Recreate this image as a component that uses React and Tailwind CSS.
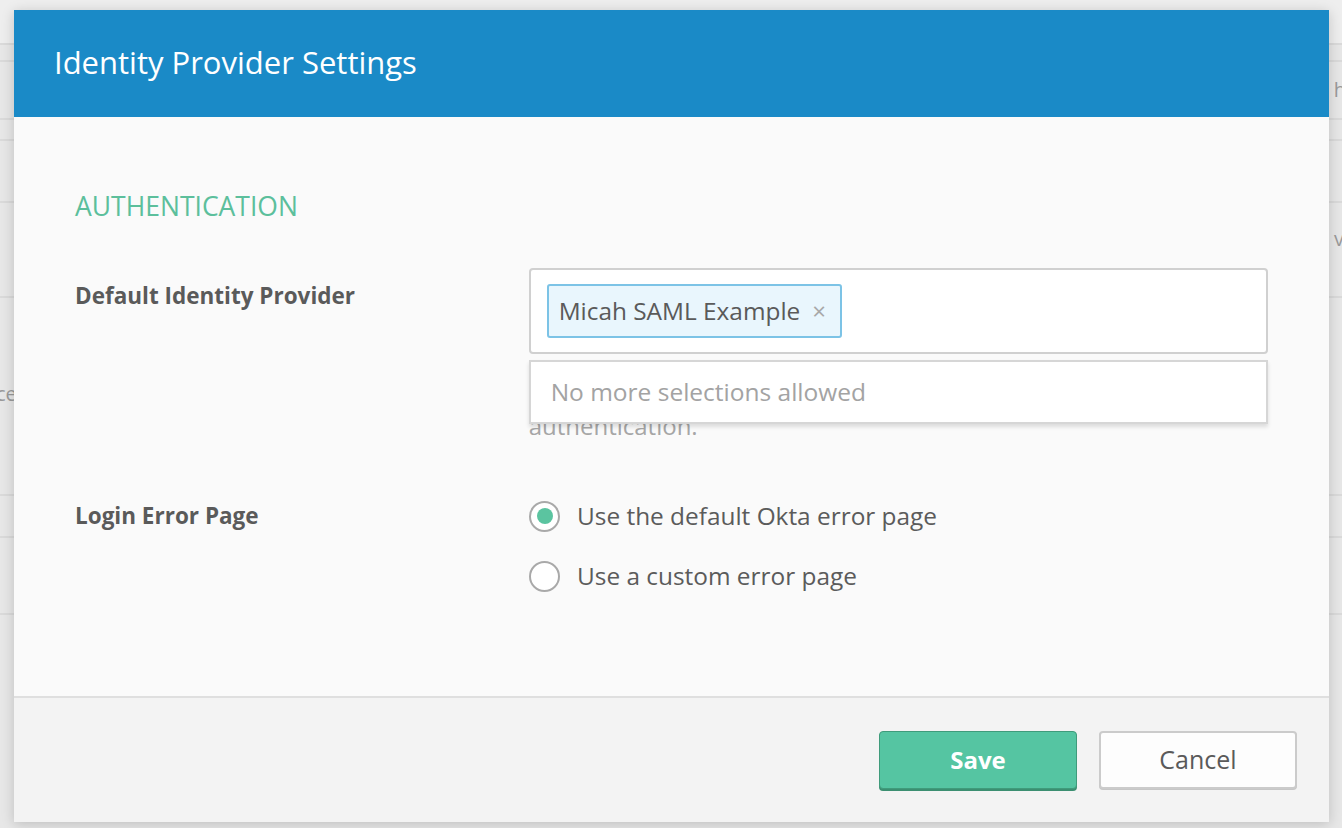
import { useState } from 'react';

const font = { fontFamily: '"Open Sans", Lato, sans-serif' };

const Radio = ({ checked, label, onClick }) => (
    <button onClick={onClick} className="flex items-center gap-[17px] h-[30px] text-left">
        <span className="w-[31px] h-[31px] rounded-full border-2 border-[#a9a9a9] bg-white flex items-center justify-center">
            {checked && <span className="w-[16px] h-[16px] rounded-full bg-[#5bc4a0]" />}
        </span>
        <span className="text-[24.4px] text-[#5b5b5b]">{label}</span>
    </button>
);

const App = () => {
    const [choice, setChoice] = useState('default');

    return (
        <div className="relative w-[1342px] h-[828px] overflow-hidden bg-[#e7e7e7]" style={font}>
            {/* page behind the dialog */}
            <div className="flex flex-col text-[20px] text-[#9a9a9a]">
                <div className="h-[45px] border-b-2 border-[#dadada] bg-[#eeeeee]" />
                <div className="h-[17px] border-b-2 border-[#dadada]" />
                <div className="h-[58px] border-b-2 border-[#dadada] flex justify-end items-center">
                    <span className="mr-[-4px]">h</span>
                </div>
                <div className="h-[21px] border-b-2 border-[#dadada]" />
                <div className="h-[62px] border-b-2 border-[#dadada]" />
                <div className="h-[95px] border-b-2 border-[#dadada] flex justify-end items-center">
                    <span className="mr-[-2px] -mt-[22px]">v</span>
                </div>
                <div className="h-[198px] border-b-2 border-[#dadada] flex items-center">
                    <span className="ml-[-4px] -mt-[4px]">ce</span>
                </div>
                <div className="h-[42px] border-b-2 border-[#dadada]" />
                <div className="h-[77px] border-b-2 border-[#dadada]" />
            </div>

            {/* dialog */}
            <div className="absolute left-[14px] top-[10px] w-[1315px] h-[812px] flex flex-col shadow-[0_2px_12px_rgba(0,0,0,0.18)]">
                <div className="h-[107px] bg-[#1a8ac7] flex items-center px-[40px]">
                    <h1 className="text-[31px] text-white -mt-[4px] leading-[40px]">Identity Provider Settings</h1>
                </div>

                <div className="flex-1 bg-[#fafafa] px-[61px] pt-[74px]">
                    <h2 className="text-[26.5px] text-[#5cbf9c] leading-[30px]">AUTHENTICATION</h2>

                    <div className="flex mt-[47px]">
                        <div className="w-[454px] pt-[14px] text-[22.5px] font-bold text-[#5a5a5a] leading-[28px]">
                            Default Identity Provider
                        </div>
                        <div className="relative w-[740px]">
                            <div className="h-[86px] bg-white border-2 border-[#d0d0d0] rounded-[4px] px-[16px] pt-[14px]">
                                <span className="inline-flex items-center h-[54px] pl-[10px] pr-[14px] gap-[12px] bg-[#e9f6fd] border-2 border-[#7cc3e6] rounded-[3px]">
                                    <span className="text-[24.4px] text-[#5a5a5a]">Micah SAML Example</span>
                                    <span className="text-[24px] text-[#a8a8a8] leading-none">×</span>
                                </span>
                            </div>
                            <p className="mt-[24px] text-[24px] leading-[32px] text-[#a6a6a6]">
                                Users are redirected to this identity provider for
                                <br />
                                authentication.
                            </p>
                            <div className="absolute left-0 right-0 top-[92px] h-[64px] bg-white border-2 border-[#d6d6d6] shadow-[0_3px_4px_rgba(0,0,0,0.12)] flex items-center px-[20px]">
                                <span className="text-[24.5px] text-[#a3a3a3]">No more selections allowed</span>
                            </div>
                        </div>
                    </div>

                    <div className="flex mt-[59px]">
                        <div className="w-[454px] text-[22.5px] font-bold text-[#5a5a5a] leading-[30px]">
                            Login Error Page
                        </div>
                        <div className="flex flex-col gap-[30px]">
                            <Radio
                                checked={choice === 'default'}
                                label="Use the default Okta error page"
                                onClick={() => setChoice('default')}
                            />
                            <Radio
                                checked={choice === 'custom'}
                                label="Use a custom error page"
                                onClick={() => setChoice('custom')}
                            />
                        </div>
                    </div>
                </div>

                <div className="h-[126px] bg-[#f3f3f3] border-t-2 border-[#dfdfdf] flex items-center justify-end gap-[22px] pr-[32px]">
                    <button className="w-[198px] h-[58px] rounded-[4px] bg-[#55c5a2] border border-[#3f9b7b] shadow-[0_2px_0_#3b8f71] text-white text-[24px] font-bold">
                        Save
                    </button>
                    <button className="w-[198px] h-[58px] rounded-[4px] bg-[#fdfdfd] border-2 border-[#cbcbcb] shadow-[0_1px_0_#c6c6c6] text-[#5a5a5a] text-[25px]">
                        Cancel
                    </button>
                </div>
            </div>
        </div>
    );
};

export default App;
